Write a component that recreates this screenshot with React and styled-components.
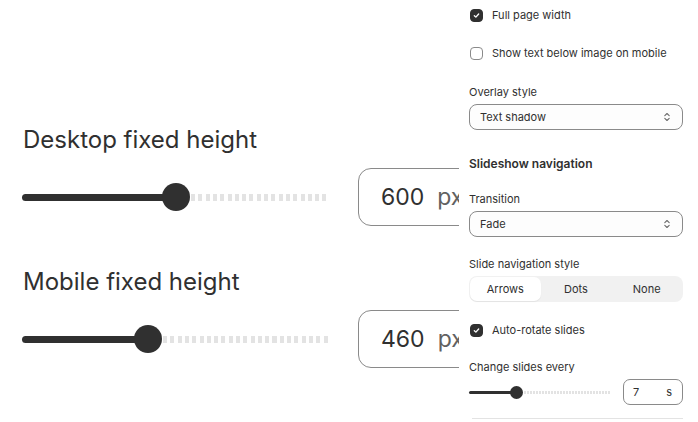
import React from 'react'
import styled, { createGlobalStyle } from 'styled-components'

const GlobalStyle = createGlobalStyle`
  html, body {
    margin: 0;
    padding: 0;
    background: #ffffff;
  }
  body {
    font-family: Inter, "Noto Sans", sans-serif;
    color: #303030;
  }
`

const Page = styled.div`
  display: flex;
  width: 698px;
  height: 422px;
  overflow: hidden;
  background: #ffffff;
`

/* ---------- zoomed preview on the left ---------- */

const Preview = styled.section`
  width: 459px;
  flex: none;
  overflow: hidden;
  padding: 126px 0 0 22px;
  box-sizing: border-box;
  display: flex;
  flex-direction: column;
  gap: 42px;
`

const BigSetting = styled.div`
  display: flex;
  flex-direction: column;
  gap: 14px;
`

const BigTitle = styled.div`
  font-family: Inter, sans-serif;
  font-size: 24px;
  line-height: 28px;
  color: #303030;
  padding-left: 1px;
  white-space: nowrap;
`

const BigRow = styled.div`
  display: flex;
  align-items: center;
  gap: 30px;
  height: 58px;
`

const Track = styled.div`
  position: relative;
  width: ${(p) => p.$width}px;
  height: ${(p) => p.$thumb}px;
  flex: none;
`

const TrackFill = styled.div`
  position: absolute;
  left: 0;
  top: 50%;
  height: ${(p) => p.$thick}px;
  margin-top: ${(p) => -p.$thick / 2}px;
  background: #303030;
  border-radius: ${(p) => p.$thick}px;
`

const TrackRest = styled.div`
  position: absolute;
  right: 0;
  top: 50%;
  height: ${(p) => p.$thick}px;
  margin-top: ${(p) => -p.$thick / 2}px;
  background: repeating-linear-gradient(
    to right,
    #e3e3e3 0,
    #e3e3e3 ${(p) => p.$dash}px,
    transparent ${(p) => p.$dash}px,
    transparent ${(p) => p.$period}px
  );
`

const Thumb = styled.div`
  position: absolute;
  top: 0;
  width: ${(p) => p.$size}px;
  height: ${(p) => p.$size}px;
  margin-left: ${(p) => -p.$size / 2}px;
  border-radius: 50%;
  background: #303030;
`

function Slider({ width, fill, thumb, thick, dash, period, gap }) {
  const pos = width * fill
  return (
    <Track $width={width} $thumb={thumb}>
      <TrackFill $thick={thick} style={{ width: pos }} />
      <TrackRest
        $thick={thick}
        $dash={dash}
        $period={period}
        style={{ left: pos + thumb / 2 + gap }}
      />
      <Thumb $size={thumb} style={{ left: pos }} />
    </Track>
  )
}

const BigInput = styled.div`
  flex: none;
  width: 150px;
  height: 58px;
  box-sizing: border-box;
  border: 1.5px solid #8a8a8a;
  border-radius: 13px;
  display: flex;
  align-items: center;
  padding-left: 22px;
  gap: 13px;
  font-family: Inter, sans-serif;
  font-size: 23px;
  color: #303030;
`

const BigUnit = styled.span`
  color: #616161;
`

/* ---------- settings panel on the right ---------- */

const Panel = styled.aside`
  width: 239px;
  flex: none;
  box-sizing: border-box;
  padding: 7px 15px 0 10px;
  display: flex;
  flex-direction: column;
  font-size: 11px;
  line-height: 16px;
  color: #303030;
`

const CheckRow = styled.label`
  display: flex;
  align-items: center;
  gap: 9px;
  height: 16px;
  padding-left: 1px;
  margin-top: ${(p) => p.$mt || 0}px;
  white-space: nowrap;
`

const Box = styled.span`
  width: 13px;
  height: 13px;
  box-sizing: border-box;
  border-radius: 4px;
  flex: none;
  display: flex;
  align-items: center;
  justify-content: center;
  background: ${(p) => (p.$checked ? '#303030' : '#ffffff')};
  border: 1px solid ${(p) => (p.$checked ? '#303030' : '#8a8a8a')};
`

function Checkbox({ checked, label, mt }) {
  return (
    <CheckRow $mt={mt}>
      <Box $checked={checked}>
        {checked && (
          <svg width="9" height="9" viewBox="0 0 10 10">
            <path
              d="M2.6 5.2 L4.3 6.8 L7.4 3.4"
              fill="none"
              stroke="#ffffff"
              strokeWidth="1.5"
              strokeLinecap="round"
              strokeLinejoin="round"
            />
          </svg>
        )}
      </Box>
      {label}
    </CheckRow>
  )
}

const Field = styled.div`
  display: flex;
  flex-direction: column;
  gap: 4px;
  margin-top: ${(p) => p.$mt || 0}px;
`

const Label = styled.div`
  height: 16px;
  white-space: nowrap;
`

const Heading = styled.div`
  font-size: 12px;
  font-weight: 600;
  height: 16px;
  margin-top: ${(p) => p.$mt || 0}px;
`

const SelectBox = styled.div`
  height: 26px;
  box-sizing: border-box;
  border: 1px solid #8a8a8a;
  border-radius: 8px;
  display: flex;
  align-items: center;
  justify-content: space-between;
  padding: 0 10px 0 10px;
  background: #fdfdfd;
`

function Select({ value }) {
  return (
    <SelectBox>
      <span>{value}</span>
      <svg width="10" height="12" viewBox="0 0 10 12">
        <path
          d="M2.8 4.6 L5 2.5 L7.2 4.6 M2.8 7.4 L5 9.5 L7.2 7.4"
          fill="none"
          stroke="#6b6b6b"
          strokeWidth="1.1"
          strokeLinecap="round"
          strokeLinejoin="round"
        />
      </svg>
    </SelectBox>
  )
}

const Segmented = styled.div`
  height: 26px;
  box-sizing: border-box;
  padding: 1px;
  border-radius: 8px;
  background: #f1f1f1;
  display: grid;
  grid-template-columns: repeat(3, 1fr);
`

const Segment = styled.div`
  display: flex;
  align-items: center;
  justify-content: center;
  border-radius: 7px;
  background: ${(p) => (p.$active ? '#ffffff' : 'transparent')};
  box-shadow: ${(p) => (p.$active ? '0 1px 1px rgba(0,0,0,0.06)' : 'none')};
`

const SmallRow = styled.div`
  display: flex;
  align-items: center;
  justify-content: space-between;
  height: 26px;
`

const SmallInput = styled.div`
  width: 60px;
  height: 26px;
  box-sizing: border-box;
  border: 1px solid #8a8a8a;
  border-radius: 7px;
  display: flex;
  align-items: center;
  justify-content: space-between;
  padding: 0 10px 0 9px;
`

const Divider = styled.div`
  height: 1px;
  background: #e3e3e3;
  margin: 13px 0 0 3px;
`

export default function App() {
  return (
    <>
      <GlobalStyle />
      <Page>
        <Preview>
          <BigSetting>
            <BigTitle>Desktop fixed height</BigTitle>
            <BigRow>
              <Slider width={306} fill={0.503} thumb={28} thick={7} dash={4} period={7.3} gap={1} />
              <BigInput>
                600<BigUnit>px</BigUnit>
              </BigInput>
            </BigRow>
          </BigSetting>
          <BigSetting>
            <BigTitle>Mobile fixed height</BigTitle>
            <BigRow>
              <Slider width={306} fill={0.412} thumb={28} thick={7} dash={4} period={7.3} gap={1} />
              <BigInput>
                460<BigUnit>px</BigUnit>
              </BigInput>
            </BigRow>
          </BigSetting>
        </Preview>

        <Panel>
          <Checkbox checked label="Full page width" />
          <Checkbox label="Show text below image on mobile" mt={22} />

          <Field $mt={23}>
            <Label>Overlay style</Label>
            <Select value="Text shadow" />
          </Field>

          <Heading $mt={26}>Slideshow navigation</Heading>

          <Field $mt={19}>
            <Label>Transition</Label>
            <Select value="Fade" />
          </Field>

          <Field $mt={19}>
            <Label>Slide navigation style</Label>
            <Segmented>
              <Segment $active>Arrows</Segment>
              <Segment>Dots</Segment>
              <Segment>None</Segment>
            </Segmented>
          </Field>

          <Checkbox checked label="Auto-rotate slides" mt={20} />

          <Field $mt={21}>
            <Label>Change slides every</Label>
            <SmallRow>
              <Slider width={141} fill={0.34} thumb={13} thick={3} dash={2} period={3} gap={1} />
              <SmallInput>
                <span>7</span>
                <span>s</span>
              </SmallInput>
            </SmallRow>
          </Field>

          <Divider />
        </Panel>
      </Page>
    </>
  )
}
